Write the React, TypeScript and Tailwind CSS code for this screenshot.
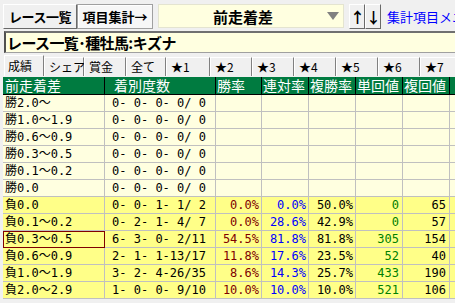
import React from "react";

type Row = {
  label: string;
  counts: string;
  win: string;
  ren: string;
  fuku: string;
  tan: string;
  fukuVal: string;
  strong: boolean;
  selected?: boolean;
};

const zero = "0- 0- 0- 0/ 0";

const rows: Row[] = [
  { label: "勝2.0〜", counts: zero, win: "", ren: "", fuku: "", tan: "", fukuVal: "", strong: false },
  { label: "勝1.0〜1.9", counts: zero, win: "", ren: "", fuku: "", tan: "", fukuVal: "", strong: false },
  { label: "勝0.6〜0.9", counts: zero, win: "", ren: "", fuku: "", tan: "", fukuVal: "", strong: false },
  { label: "勝0.3〜0.5", counts: zero, win: "", ren: "", fuku: "", tan: "", fukuVal: "", strong: false },
  { label: "勝0.1〜0.2", counts: zero, win: "", ren: "", fuku: "", tan: "", fukuVal: "", strong: false },
  { label: "勝0.0", counts: zero, win: "", ren: "", fuku: "", tan: "", fukuVal: "", strong: false },
  { label: "負0.0", counts: "0- 0- 1- 1/ 2", win: "0.0%", ren: "0.0%", fuku: "50.0%", tan: "0", fukuVal: "65", strong: true },
  { label: "負0.1〜0.2", counts: "0- 2- 1- 4/ 7", win: "0.0%", ren: "28.6%", fuku: "42.9%", tan: "0", fukuVal: "57", strong: true },
  { label: "負0.3〜0.5", counts: "6- 3- 0- 2/11", win: "54.5%", ren: "81.8%", fuku: "81.8%", tan: "305", fukuVal: "154", strong: true, selected: true },
  { label: "負0.6〜0.9", counts: "2- 1- 1-13/17", win: "11.8%", ren: "17.6%", fuku: "23.5%", tan: "52", fukuVal: "40", strong: true },
  { label: "負1.0〜1.9", counts: "3- 2- 4-26/35", win: "8.6%", ren: "14.3%", fuku: "25.7%", tan: "433", fukuVal: "190", strong: true },
  { label: "負2.0〜2.9", counts: "1- 0- 0- 9/10", win: "10.0%", ren: "10.0%", fuku: "10.0%", tan: "521", fukuVal: "106", strong: true },
];

const tabs = [
  { label: "成績", w: "w-[40px]" },
  { label: "シェア", w: "w-[40px]" },
  { label: "賞金", w: "w-[42px]" },
  { label: "全て", w: "w-[40px]" },
  { label: "★1", w: "w-[44px]" },
  { label: "★2", w: "w-[42px]" },
  { label: "★3", w: "w-[42px]" },
  { label: "★4", w: "w-[42px]" },
  { label: "★5", w: "w-[42px]" },
  { label: "★6", w: "w-[42px]" },
  { label: "★7", w: "w-[42px]" },
];

const cell = "h-[17px] shrink-0 border-r border-b border-[#c0c0c0] leading-[16px] whitespace-pre";
const raised = "border border-t-white border-l-white border-r-[#696969] border-b-[#696969] bg-[#f0f0f0]";

export default function App() {
  return (
    <div className="w-[455px] h-[303px] overflow-hidden bg-[#f0f0f0] font-['Noto_Sans_CJK_JP',sans-serif] text-black">
      {/* Top toolbar */}
      <div className="flex items-center h-[31px] pl-[3px] pt-[1px]">
        <button className={`shrink-0 h-[25px] w-[74px] ${raised} text-[13px] font-bold tracking-[-0.5px] leading-none whitespace-nowrap`}>
          レース一覧
        </button>
        <button className="shrink-0 h-[25px] w-[76px] border border-[#a0a0a0] bg-[#f7f7f7] text-[13px] font-bold leading-none whitespace-nowrap shadow-[inset_1px_1px_0_#ffffff]">
          項目集計→
        </button>
        <div className="shrink-0 ml-[5px] flex items-center h-[24px] w-[186px] bg-[#ffffe0] border border-[#e4e4d0]">
          <span className="flex-1 pl-[54px] text-[15px] font-bold leading-none">前走着差</span>
          <svg width="12" height="8" viewBox="0 0 12 8" className="mr-[4px]">
            <polygon points="0,0 12,0 6,8" fill="#808080" />
          </svg>
        </div>
        <button className={`shrink-0 ml-[5px] h-[25px] w-[16px] ${raised} text-[15px] font-bold leading-none`}>
          ↑
        </button>
        <button className={`shrink-0 h-[25px] w-[16px] ${raised} text-[15px] font-bold leading-none`}>
          ↓
        </button>
        <span className="shrink-0 ml-[6px] text-[13px] text-[#0000ff] whitespace-nowrap leading-none">集計項目メニュー</span>
      </div>

      {/* Title */}
      <div className="ml-[4px] h-[22px] bg-[#ffffe0] border-t-2 border-l-2 border-t-[#707070] border-l-[#505050] border-b border-b-[#a0a0a0] flex items-center pl-[1px]">
        <span className="text-[15px] font-bold tracking-[-0.6px] leading-none whitespace-nowrap">
          レース一覧･種牡馬:キズナ
        </span>
      </div>

      {/* Tabs */}
      <div className="flex h-[21px] mt-[2px] ml-[4px] items-end">
        {tabs.map((t, i) => (
          <div
            key={t.label}
            className={`${t.w} shrink-0 border-r border-r-[#808080] border-l border-l-white text-[12px] leading-none whitespace-nowrap flex items-center ${
              i === 0
                ? "h-[21px] pl-[3px] border-t border-t-white"
                : "h-[19px] pl-[4px] border-t border-t-[#ffffff] bg-[#f0f0f0]"
            }`}
          >
            {t.label}
          </div>
        ))}
      </div>

      {/* Grid */}
      <div className="ml-[3px] mt-[1px]">
        <div className="flex h-[18px] bg-[#007b40] text-white text-[14px] border-b border-black">
          <div className="w-[102px] shrink-0 border-r border-black pl-[2px] leading-[17px]">前走着差</div>
          <div className="w-[111px] shrink-0 border-r border-black pl-[9px] leading-[17px]">着別度数</div>
          <div className="w-[46px] shrink-0 border-r border-black pl-[1px] leading-[17px]">勝率</div>
          <div className="w-[47px] shrink-0 border-r border-black pl-[1px] leading-[17px]">連対率</div>
          <div className="w-[47px] shrink-0 border-r border-black pl-[1px] leading-[17px]">複勝率</div>
          <div className="w-[47px] shrink-0 border-r border-black pl-[1px] leading-[17px]">単回値</div>
          <div className="w-[47px] shrink-0 border-r border-black pl-[1px] leading-[17px]">複回値</div>
          <div className="w-[20px] shrink-0" />
        </div>
        {rows.map((r) => (
          <div
            key={r.label}
            className={`flex font-['DejaVu_Sans_Mono','Noto_Sans_CJK_JP',monospace] text-[12px] ${
              r.strong ? "bg-[#ffff88]" : "bg-[#ffffe0]"
            }`}
          >
            <div
              className={`${cell} w-[102px] pl-[2px] ${
                r.selected ? "outline outline-1 -outline-offset-1 outline-[#800000]" : ""
              }`}
            >
              {r.label}
            </div>
            <div className={`${cell} w-[111px] text-center pr-[2px]`}>{r.counts}</div>
            <div className={`${cell} w-[46px] text-right pr-[2px] text-[#800000]`}>{r.win}</div>
            <div className={`${cell} w-[47px] text-right pr-[2px] text-[#0000ff]`}>{r.ren}</div>
            <div className={`${cell} w-[47px] text-right pr-[2px]`}>{r.fuku}</div>
            <div className={`${cell} w-[47px] text-right pr-[3px] text-[#008000]`}>{r.tan}</div>
            <div className={`${cell} w-[47px] text-right pr-[3px]`}>{r.fukuVal}</div>
            <div className={`${cell} w-[20px]`} />
          </div>
        ))}
      </div>
    </div>
  );
}
